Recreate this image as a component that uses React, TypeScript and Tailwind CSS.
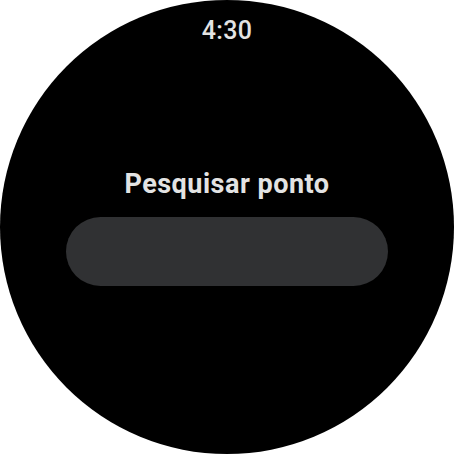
export default function App() {
  return (
    <div className="w-[454px] h-[454px] bg-white" style={{ fontFamily: 'Roboto, "Noto Sans", sans-serif' }}>
      <div className="w-[454px] h-[454px] rounded-full bg-black flex flex-col items-center pt-[18px]">
        {/* clock */}
        <div className="text-[25px] leading-none font-medium text-[#e3e3e3] tracking-[0.3px]">4:30</div>

        {/* screen title */}
        <h1 className="mt-[128px] text-[27px] leading-none font-bold text-[#e3e3e3] tracking-[0.5px]">Pesquisar ponto</h1>

        {/* search field */}
        <div className="mt-[19px] w-[322px] h-[69px] rounded-full bg-[#303133]" />
      </div>
    </div>
  );
}
